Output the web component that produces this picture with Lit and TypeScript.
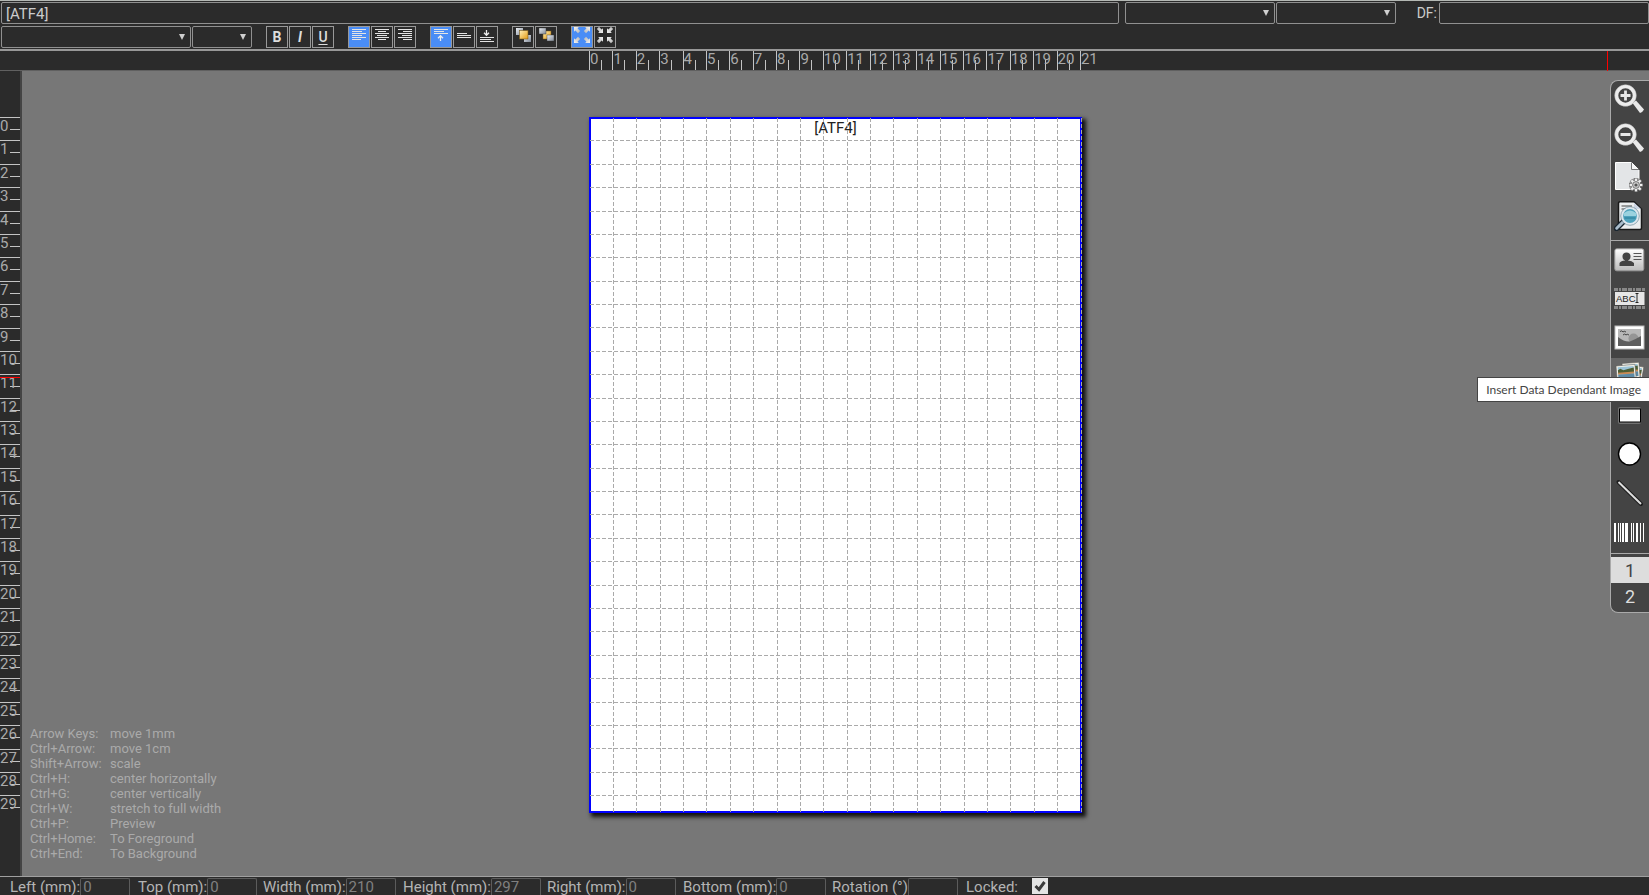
import { LitElement, html, svg, css } from "lit";
import { customElement, state } from "lit/decorators.js";

const range = (n: number) => Array.from({ length: n }, (_, i) => i);

const textLines = (ys: number[], widths: number[], align: "l" | "c" | "r") =>
  ys.map((y, i) => {
    const w = widths[i % widths.length];
    const x = align === "l" ? 3 : align === "r" ? 17 - w : 10 - w / 2;
    return svg`<rect x=${x} y=${y} width=${w} height="1" fill="#e4e4e4"/>`;
  });

const arrow = (x: number, y: number, deg: number) =>
  svg`<path transform=${`translate(${x} ${y}) rotate(${deg})`} d="M-3 -3H1.800L.6 -1.600L3.200 1L1 3.200L-1.600 .6L-3 1.800Z" fill="url(#silver)"/>`;

const silver = svg`<defs>
  <linearGradient id="silver" x1="0" y1="0" x2="1" y2="1"><stop offset="0" stop-color="#f4f4f4"/><stop offset="1" stop-color="#b4b4b4"/></linearGradient>
  <linearGradient id="gold" x1="0" y1="0" x2="1" y2="1"><stop offset="0" stop-color="#fff0b8"/><stop offset="1" stop-color="#e39a12"/></linearGradient>
  <linearGradient id="steel" x1="0" y1="0" x2="1" y2="1"><stop offset="0" stop-color="#eef1f5"/><stop offset="1" stop-color="#7e8794"/></linearGradient>
</defs>`;

const small = {
  alignLeft: textLines([2, 4, 6, 8, 10, 12], [14, 10, 14, 10, 14, 9], "l"),
  alignCenter: textLines([2, 4, 6, 8, 10, 12], [14, 8, 14, 10, 14, 8], "c"),
  alignRight: textLines([2, 4, 6, 8, 10, 12], [14, 9, 14, 10, 14, 9], "r"),
  top: svg`${textLines([2, 4, 6], [14, 10, 14], "l")}<path d="M9.500 14V9M7 11.200L9.500 8.700L12 11.200" stroke="#eee" stroke-width="1.300" fill="none"/>`,
  middle: textLines([6, 8, 10], [10, 14, 14], "l"),
  bottom: svg`<path d="M9.500 3V8M7 5.800L9.500 8.300L12 5.800" stroke="#eee" stroke-width="1.300" fill="none"/>${textLines([10, 12, 14], [14, 11, 14], "l")}`,
  front: svg`${silver}<rect x="3" y="1" width="7" height="7" fill="url(#steel)"/><rect x="11" y="8" width="7" height="7" fill="url(#steel)"/><rect x="6.500" y="3.500" width="8.500" height="8.500" fill="url(#gold)" stroke="#7a5a1c" stroke-width=".6"/>`,
  back: svg`${silver}<rect x="7" y="4" width="8" height="8" fill="url(#gold)" stroke="#7a5a1c" stroke-width=".5"/><rect x="3" y="1" width="7" height="6" fill="url(#steel)" stroke="#333" stroke-width=".4"/><rect x="11" y="8" width="7" height="6" fill="url(#steel)" stroke="#333" stroke-width=".4"/>`,
  expand: svg`${silver}${arrow(5, 3, 180)}${arrow(15, 3, 270)}${arrow(15, 13, 180)}${arrow(5, 13, 270)}`,
  shrink: svg`${silver}${arrow(5, 3, 180)}${arrow(15, 3, 270)}${arrow(15, 13, 0)}${arrow(5, 13, 90)}`,
};
small.expand = svg`${silver}${arrow(5, 3, 0)}${arrow(15, 3, 90)}${arrow(15, 13, 180)}${arrow(5, 13, 270)}`;

const lens = (bar: unknown) => svg`
  <path d="M18.500 19L22 16.500L30 25.500Q28 29 26 29Z" fill="#e9e9e9"/>
  <circle cx="11.500" cy="11.500" r="9" fill="none" stroke="#ececec" stroke-width="3.600"/>
  <circle cx="11.500" cy="11.500" r="10.800" fill="none" stroke="#bbb" stroke-width=".5"/>${bar}`;

const teeth = range(8).map(
  (i) => svg`<rect x="20.700" y="16.200" width="2.600" height="4" fill="#eee" transform=${`rotate(${i * 45} 22 23)`}/>`
);

const bars: [number, number][] = [[0, 2], [4, 1], [6, 1], [8, 2], [11, 3], [17, 1], [19, 1], [22, 2], [26, 1], [29, 1]];

const photo = (w: number, h: number) => svg`
  <rect width=${w} height=${h} fill="#f4f2e8" stroke="#555" stroke-width=".5"/>
  <rect x="1.500" y="1.500" width=${w - 3} height=${h - 3} fill="#9cc4d8"/>
  <path d=${`M1.500 4.500L4 3L7 5L${w * 0.6} 4L${w - 1.5} 3V8H1.500Z`} fill="#4d5f35"/>
  <rect x="1.500" y="7" width=${w - 3} height="2" fill="#c98a54"/>
  <rect x="1.500" y="9" width=${w - 3} height=${h - 10.5} fill="#5d8aa5"/>`;

type Tool = { label: string; art: unknown };

const viewTools: Tool[] = [
  { label: "Zoom In", art: lens(svg`<path d="M6.500 11.500H16.500M11.500 6.500V16.500" stroke="#e8e8e8" stroke-width="2.800"/>`) },
  { label: "Zoom Out", art: lens(svg`<path d="M6.500 11.500H16.500" stroke="#e8e8e8" stroke-width="2.800"/>`) },
  {
    label: "Page Settings",
    art: svg`<path d="M1.500 .5H17.500L25 8V27.500H1.500Z" fill="#e3e5e7" stroke="#fff"/><path d="M17.500 .5V7.500H25" fill="#f8f8f8" stroke="#777"/>
      <circle cx="22" cy="23" r="7" fill="#555" opacity=".55"/><g stroke="#555" stroke-width=".4">${teeth}</g><circle cx="22" cy="23" r="4.300" fill="#eee"/><circle cx="22" cy="23" r="3.400" fill="#ccc" stroke="#777"/><circle cx="22" cy="23" r="1.600" fill="#555"/>`,
  },
  {
    label: "Preview",
    art: svg`<path d="M6 .8H20L27.500 8V27Q27.500 28.500 26 28.500H6Q4.500 28.500 4.500 27V2.500Q4.500 .8 6 .8Z" fill="#eceeef" stroke="#181818" stroke-width="1.500"/>
      <path d="M7.500 5H18M7.500 8H17" stroke="#444" stroke-width="1.200"/><path d="M20 1.500V8H27" fill="#cdd6e4"/>
      <path d="M10 20L2.500 27.500" stroke="#1a2630" stroke-width="5.500" stroke-linecap="round"/><path d="M10.500 19.500L2.700 27.200" stroke="#a9bccb" stroke-width="3" stroke-linecap="round"/>
      <circle cx="16" cy="15" r="8" fill="#4fa3bd" stroke="#dde7ee" stroke-width="2.200"/><circle cx="16" cy="15" r="9.300" fill="none" stroke="#5b7c8c" stroke-width=".6"/>
      <path d="M10 12Q16 7 22 12V15H10Z" fill="#9ad2df"/><path d="M10.500 17H21.500" stroke="#277c98"/>`,
  },
];

const insertTools: Tool[] = [
  {
    label: "Insert Data Field",
    art: svg`<defs><linearGradient id="card" x2="0" y2="1"><stop stop-color="#fff"/><stop offset="1" stop-color="#bbb"/></linearGradient></defs>
      <rect x=".8" y="4.800" width="29" height="22" rx="2" fill="url(#card)" stroke="#999"/>
      <circle cx="12.500" cy="12.500" r="4" fill="#444"/><path d="M5.500 22V19Q7 16.500 11 16.500V14H14V16.500Q18 16.500 20 19V22Z" fill="#444"/>
      <path d="M19.500 9.500H27.500M19.500 12.500H27.500M19.500 15.500H27.500" stroke="#555" stroke-width="1.200"/>`,
  },
  {
    label: "Insert Text",
    art: svg`<path d="M0 6.500H31M0 24.500H31" stroke="#888" stroke-width="3" stroke-dasharray="4 1 2 1 5 1"/>
      <rect x="1" y="9" width="29.500" height="13" fill="#e6e6e6"/>
      <text x="2" y="19" font-size="9.500" font-family="Liberation Sans, sans-serif" fill="#222">ABC</text>
      <path d="M21.500 10.500H24.500M23 10.500V19.500M21.500 19.500H24.500" stroke="#222" fill="none"/>`,
  },
  {
    label: "Insert Image",
    art: svg`<rect x="1" y="4" width="29" height="23" fill="#fff" stroke="#bbb"/><rect x="4" y="7" width="23" height="17" fill="#b8b8b8"/>
      <circle cx="19.500" cy="16.500" r="5" fill="#959595"/><path d="M4 15Q12 21 17 19T27 14V24H4Z" fill="#5e5e5e"/>
      <path d="M6 9.500Q8 8 9 10Q10 8.500 12 10M9 13Q11 11 12 13Q13 11.500 15 13" fill="none" stroke="#444"/>`,
  },
  {
    label: "Insert Data Dependant Image",
    art: svg`<g transform="translate(18 4) rotate(10)">${photo(12, 15)}</g><g transform="translate(8 2.500) rotate(-4)">${photo(17, 15)}</g><g transform="translate(2 5) rotate(-5)">${photo(19, 17)}</g>`,
  },
  { label: "Insert Rectangle", art: svg`<rect x="4" y="7" width="23" height="17" rx="2" fill="#999" opacity=".55"/><rect x="5.500" y="9" width="21" height="13" fill="#fff" stroke="#000"/>` },
  { label: "Insert Ellipse", art: svg`<circle cx="15.500" cy="15" r="11" fill="#fff" stroke="#000" stroke-width="1.400"/>` },
  { label: "Insert Line", art: svg`<path d="M4.500 4L27 26" stroke="#1c1c1c" stroke-width="4" stroke-linecap="round"/><path d="M4.500 4L27 26" stroke="#ddd" stroke-width="2"/>` },
  { label: "Insert Barcode", art: bars.map(([x, w]) => svg`<rect x=${x} y="6" width=${w} height="19" fill="#fff"/>`) },
];

const shortcuts = [
  ["Arrow Keys:", "move 1mm"],
  ["Ctrl+Arrow:", "move 1cm"],
  ["Shift+Arrow:", "scale"],
  ["Ctrl+H:", "center horizontally"],
  ["Ctrl+G:", "center vertically"],
  ["Ctrl+W:", "stretch to full width"],
  ["Ctrl+P:", "Preview"],
  ["Ctrl+Home:", "To Foreground"],
  ["Ctrl+End:", "To Background"],
];

const geometry = [
  ["Left (mm):", "0"],
  ["Top (mm):", "0"],
  ["Width (mm):", "210"],
  ["Height (mm):", "297"],
  ["Right (mm):", "0"],
  ["Bottom (mm):", "0"],
  ["Rotation (°)", ""],
];

@customElement("app-root")
export class AppRoot extends LitElement {
  @state() private page = 1;

  static styles = css`
    :host {
      display: flex;
      flex-direction: column;
      height: 100vh;
      overflow: hidden;
      background: #2b2b2b;
      color: #ccc;
      font: 15px/20px Roboto, "Liberation Sans", sans-serif;
    }
    * { box-sizing: border-box; }
    input, select, button { font: inherit; color: inherit; margin: 0; }
    .bar {
      display: flex;
      flex-direction: column;
      gap: 2px;
      padding: 1px 0 1px 1px;
      border-top: 1px solid #b4b8b4;
      border-bottom: 2px solid #989898;
    }
    .row { display: flex; align-items: center; }
    .field {
      height: 22px;
      padding: 0 4px;
      background: #2b2b2b;
      border: 1px solid #909090;
      border-radius: 2px;
      outline: none;
    }
    .content { flex: 1; min-width: 0; margin-right: 6px; padding-top: 1px; }
    .df { width: 210px; }
    .df-label { margin: 0 2px 0 21px; font-size: 14px; }
    .pick { position: relative; display: flex; }
    .pick + .pick { margin-left: 1px; }
    .pick select { appearance: none; width: 100%; }
    .pick::after {
      content: "";
      position: absolute;
      right: 6px;
      top: 8px;
      border: 3px solid transparent;
      border-top: 6px solid #d0d0d0;
      border-bottom: 0;
      pointer-events: none;
    }
    .w190 { width: 190px; }
    .w150 { width: 150px; }
    .w120 { width: 120px; }
    .w60 { width: 60px; }
    .group { display: flex; gap: 1px; margin-left: 14px; }
    .btn {
      width: 22px;
      height: 22px;
      padding: 0;
      background: #2b2b2b;
      border: 1px solid #999;
      display: grid;
      place-items: center;
      font-size: 14px;
      font-weight: 700;
      color: #ddd;
    }
    .btn svg { width: 20px; height: 20px; }
    .on { background: #4a8df6; }
    .italic { font-style: italic; }
    .under { text-decoration: underline; text-underline-offset: 2px; font-weight: 500; }

    .top-ruler {
      position: relative;
      display: flex;
      justify-content: center;
      height: 20px;
      flex: none;
      padding-left: 22px;
      border-bottom: 1px solid #606060;
    }
    .scale-x { display: flex; width: 493px; padding-right: 2px; }
    .tick {
      flex: 1 1 0;
      min-width: 0;
      min-height: 0;
      color: #aaa;
      line-height: 16px;
      white-space: nowrap;
    }
    .scale-x .tick {
      border-left: 1px solid #c4c4c4;
      background: linear-gradient(#c4c4c4, #c4c4c4) 11px 9px / 1px 11px no-repeat;
    }
    .scale-x .end { flex: 0 0 0; margin-right: -1px; background: none; }
    .work { flex: 1; min-height: 0; display: flex; }
    .left-ruler {
      position: relative;
      width: 22px;
      flex: none;
      padding-top: 46px;
      border-right: 2px solid #444;
    }
    .scale-y { display: flex; flex-direction: column; height: 695px; }
    .scale-y .tick {
      border-top: 1px solid #c4c4c4;
      background: linear-gradient(#c4c4c4, #c4c4c4) 10px 11px / 10px 1px no-repeat;
    }
    .scale-y .end { flex-grow: 0.7; }
    .mark { position: absolute; background: #f00; }
    .mark-x { width: 1px; height: 20px; top: 0; right: 41px; }
    .mark-y { height: 1px; width: 20px; left: 0; top: 306px; }

    .canvas {
      position: relative;
      flex: 1;
      min-width: 0;
      display: flex;
      justify-content: center;
      align-items: flex-start;
      padding-top: 46px;
      background: #777;
      overflow: hidden;
    }
    .page {
      position: relative;
      width: 493px;
      height: 696px;
      background: #fff;
      box-shadow: 3px 3px 4px 1px #111;
      color: #222;
      text-align: center;
      line-height: 22px;
    }
    .page svg { position: absolute; left: 0; top: 0; width: 100%; height: 100%; }
    .shortcuts {
      position: absolute;
      left: 8px;
      bottom: 15px;
      display: grid;
      grid-template-columns: 80px auto;
      margin: 0;
      font-size: 13px;
      line-height: 15px;
      color: #aaa;
    }
    .shortcuts dd { margin: 0; }
    .panel {
      position: absolute;
      right: 0;
      top: 9px;
      width: 39px;
      background: #444;
      border: 1px solid #aaa;
      border-right: 0;
      border-radius: 8px 0 0 8px;
      overflow: hidden;
    }
    .tools { display: flex; flex-direction: column; border-bottom: 1px solid #aaa; }
    .tools.view { padding-bottom: 3px; }
    .tool {
      height: 39px;
      padding: 3px 0 0 3px;
      border: 0;
      background: none;
      display: flex;
      align-items: flex-start;
    }
    .tool svg { width: 31px; height: 30px; }
    .hover { background: #666; }
    .pages { display: flex; flex-direction: column; padding: 3px 0; }
    .num {
      height: 26px;
      padding: 1px 0 0;
      border: 0;
      background: none;
      font-size: 18px;
      color: #ddd;
    }
    .current { background: #ddd; color: #444; }
    .tip {
      position: absolute;
      right: -1px;
      top: 306px;
      height: 25px;
      padding: 0 8px;
      border: 1px solid #444;
      background: #fff;
      color: #444;
      font: 12px/24px Lato, "Open Sans", sans-serif;
      white-space: nowrap;
    }

    .status {
      display: grid;
      grid-template-columns: 120px 117px 132px 136px 128px 141px 126px auto;
      justify-content: start;
      column-gap: 8px;
      flex: none;
      height: 19px;
      padding: 1px 0 0 10px;
      border-top: 1px solid #a0a0a0;
      color: #b4b4b4;
      line-height: 18px;
    }
    .geo { display: flex; justify-content: space-between; height: 17px; white-space: nowrap; }
    .geo .field {
      width: 50px;
      height: 17px;
      padding: 0 2px;
      border-color: #5c5c5c;
      border-bottom: 0;
      border-radius: 2px 2px 0 0;
      color: #808080;
    }
    .lock { display: flex; gap: 14px; height: 17px; }
    .check { appearance: none; width: 16px; height: 16px; background: #e4e4e4; }
    .checkbox { position: relative; display: flex; height: 16px; }
    .checkbox svg { position: absolute; left: 0; top: 0; width: 16px; height: 16px; pointer-events: none; }
  `;

  private button(label: string, art: unknown, extra = "") {
    return html`<button class="btn ${extra}" aria-label=${label}><svg viewBox="0 0 20 20">${art}</svg></button>`;
  }

  private select(label: string, width: string) {
    return html`<div class="pick ${width}"><select class="field" aria-label=${label}><option></option></select></div>`;
  }

  private tool(t: Tool, hover = false) {
    return html`<button class="tool ${hover ? "hover" : ""}" aria-label=${t.label}><svg viewBox="0 0 31 30">${t.art}</svg></button>`;
  }

  private grid() {
    const step = 491 / 21;
    return svg`<rect x="1" y="1" width="491" height="694" fill="none" stroke="#00f" stroke-width="2"/>
      <g stroke="#aaa" stroke-dasharray="4 2" shape-rendering="crispEdges">
        ${range(21).map((i) => { const x = Math.floor(((i + 1) * 491) / 21) + 1.5; return svg`<line x1=${x} x2=${x} y1="1" y2="695"/>`; })}
        ${range(29).map((i) => { const y = Math.round((i + 1) * step) + 0.5; return svg`<line x1="1" x2="492" y1=${y} y2=${y}/>`; })}
      </g>`;
  }

  render() {
    return html`
      <header class="bar">
        <div class="row">
          <input class="field content" aria-label="Content" value="[ATF4]" />
          ${this.select("Data source", "w150")}${this.select("Data field", "w120")}
          <label class="df-label" for="df">DF:</label><input id="df" class="field df" />
        </div>
        <div class="row">
          ${this.select("Font", "w190")}${this.select("Font size", "w60")}
          <div class="group">
            <button class="btn">B</button><button class="btn italic">I</button><button class="btn under">U</button>
          </div>
          <div class="group">
            ${this.button("Align left", small.alignLeft, "on")}${this.button("Align center", small.alignCenter)}${this.button("Align right", small.alignRight)}
          </div>
          <div class="group">
            ${this.button("Align top", small.top, "on")}${this.button("Align middle", small.middle)}${this.button("Align bottom", small.bottom)}
          </div>
          <div class="group">${this.button("To foreground", small.front)}${this.button("To background", small.back)}</div>
          <div class="group">${this.button("Expand", small.expand, "on")}${this.button("Shrink", small.shrink)}</div>
        </div>
      </header>
      <div class="top-ruler">
        <div class="scale-x">${range(22).map((i) => html`<div class="tick ${i === 21 ? "end" : ""}">${i}</div>`)}</div>
        <div class="mark mark-x"></div>
      </div>
      <main class="work">
        <div class="left-ruler">
          <div class="scale-y">${range(30).map((i) => html`<div class="tick ${i === 29 ? "end" : ""}">${i}</div>`)}</div>
          <div class="mark mark-y"></div>
        </div>
        <div class="canvas">
          <div class="page"><svg viewBox="0 0 493 696">${this.grid()}</svg>[ATF4]</div>
          <dl class="shortcuts">${shortcuts.map(([k, v]) => html`<dt>${k}</dt><dd>${v}</dd>`)}</dl>
          <nav class="panel">
            <div class="tools view">${viewTools.map((t) => this.tool(t))}</div>
            <div class="tools">${insertTools.map((t, i) => this.tool(t, i === 3))}</div>
            <div class="pages">
              ${[1, 2].map((n) => html`<button class="num ${n === this.page ? "current" : ""}" @click=${() => (this.page = n)}>${n}</button>`)}
            </div>
          </nav>
          <div class="tip" role="tooltip">Insert Data Dependant Image</div>
        </div>
      </main>
      <footer class="status">
        ${geometry.map(([label, value], i) => html`<div class="geo"><label for="geo${i}">${label}</label><input id="geo${i}" class="field" value=${value} /></div>`)}
        <div class="lock">
          <label for="locked">Locked:</label>
          <span class="checkbox"><input id="locked" class="check" type="checkbox" checked /><svg viewBox="0 0 16 16"><path d="M3.500 8L7 11.500L12.500 4" fill="none" stroke="#3a3a3a" stroke-width="3"/></svg></span>
        </div>
      </footer>
    `;
  }
}
